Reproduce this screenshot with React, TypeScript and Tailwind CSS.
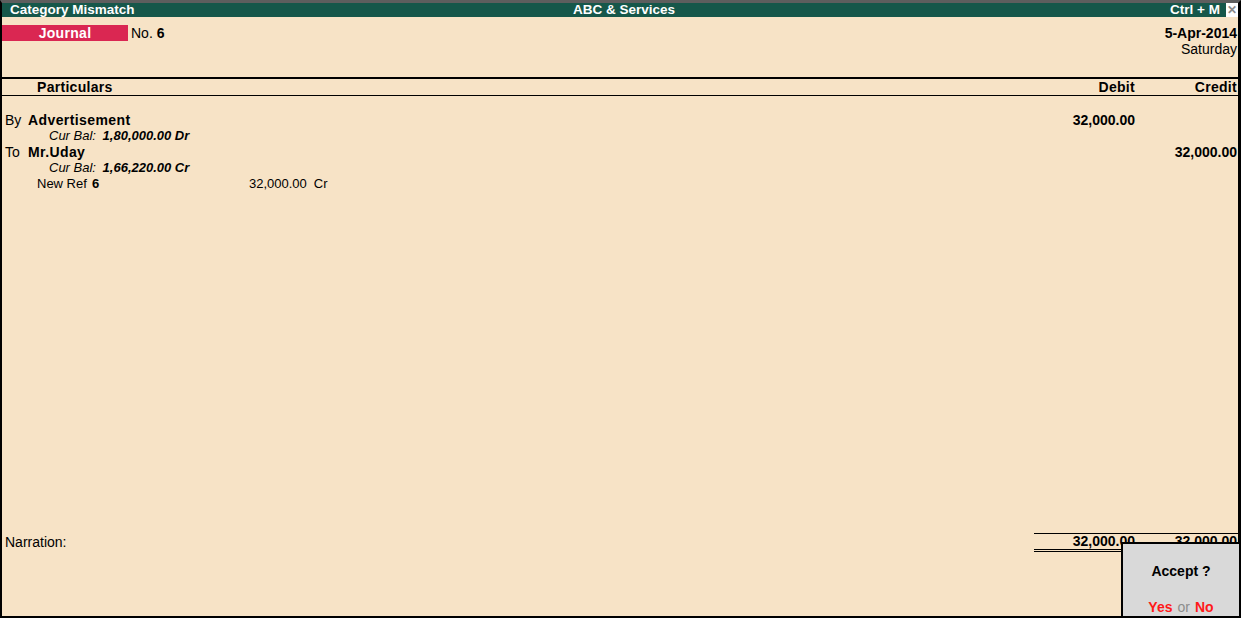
import React from 'react';

const font = { fontFamily: '"Liberation Sans", Arial, sans-serif' };

const App: React.FC = () => {
    return (
        <div
            className="relative w-[1241px] h-[618px] flex flex-col bg-[#f7e3c6] border-t-[3px] border-t-[#5e5e5e] border-l-2 border-r-[3px] border-b-2 border-black text-black text-[14px]"
            style={font}
        >
            {/* title bar */}
            <div className="h-[14px] flex items-center bg-[#16574a] text-white font-bold text-[13.5px] leading-[14px]">
                <div className="flex-1 pl-[8px]">Category Mismatch</div>
                <div>ABC &amp; Services</div>
                <div className="flex-1 flex justify-end items-center">
                    <span className="mr-[6px]">Ctrl + M</span>
                    <span className="w-[12px] h-[14px] bg-white text-[#8a8a8a] text-[12px] font-bold flex items-center justify-center">
                        ✕
                    </span>
                </div>
            </div>

            {/* voucher header */}
            <div className="h-[60px] flex justify-between pt-[8px]">
                <div className="flex items-start">
                    <div className="w-[126px] h-[16px] bg-[#da2752] text-white font-bold leading-[16px] text-center tracking-[0.3px]">
                        Journal
                    </div>
                    <div className="ml-[3px] leading-[16px]">
                        No. <span className="font-bold">6</span>
                    </div>
                </div>
                <div className="text-right pr-[1px] leading-[16px]">
                    <div className="font-bold">5-Apr-2014</div>
                    <div>Saturday</div>
                </div>
            </div>

            {/* column headers */}
            <div className="grid grid-cols-[1fr_101px_103px] border-t-2 border-b border-black h-[19px] pt-[1px] leading-[15px] font-bold tracking-[0.3px]">
                <div className="pl-[35px]">Particulars</div>
                <div className="text-right">Debit</div>
                <div className="text-right pr-[1px]">Credit</div>
            </div>

            {/* entries */}
            <div className="flex-1 pt-[16px] leading-[16px]">
                <div className="grid grid-cols-[1fr_101px_103px]">
                    <div className="pl-[3px] flex">
                        <span className="w-[23px]">By</span>
                        <span className="font-bold tracking-[0.4px]">Advertisement</span>
                    </div>
                    <div className="text-right font-bold">32,000.00</div>
                    <div />
                </div>
                <div className="pl-[47px] italic text-[13px]">
                    Cur Bal: <span className="font-bold ml-[3px]">1,80,000.00 Dr</span>
                </div>
                <div className="grid grid-cols-[1fr_101px_103px]">
                    <div className="pl-[3px] flex">
                        <span className="w-[23px]">To</span>
                        <span className="font-bold tracking-[0.4px]">Mr.Uday</span>
                    </div>
                    <div />
                    <div className="text-right font-bold pr-[1px]">32,000.00</div>
                </div>
                <div className="pl-[47px] italic text-[13px]">
                    Cur Bal: <span className="font-bold ml-[3px]">1,66,220.00 Cr</span>
                </div>
                <div className="pl-[35px] flex text-[13px]">
                    <span className="w-[55px]">New Ref</span>
                    <span className="w-[157px] font-bold">6</span>
                    <span>32,000.00</span>
                    <span className="ml-[7px]">Cr</span>
                </div>
            </div>

            {/* totals + narration */}
            <div className="h-[83px] grid grid-cols-[1fr_204px] items-start">
                <div className="pl-[3px] pt-[1px] leading-[16px]">Narration:</div>
                <div className="grid grid-cols-[101px_103px] border-t border-b-[3px] border-b-black border-double border-t-black font-bold leading-[15px]">
                    <div className="text-right">32,000.00</div>
                    <div className="text-right pr-[1px]">32,000.00</div>
                </div>
            </div>

            {/* accept prompt */}
            <div className="absolute -right-[3px] -bottom-[2px] w-[120px] h-[76px] bg-[#d9d9d9] border-2 border-black flex flex-col items-center">
                <div className="mt-[19px] font-bold leading-[16px]">Accept ?</div>
                <div className="mt-[20px] leading-[16px] font-bold">
                    <span className="text-[#ff1a1a]">Yes</span>
                    <span className="text-[#8c8c8c] font-normal mx-[5px]">or</span>
                    <span className="text-[#ff1a1a]">No</span>
                </div>
            </div>
        </div>
    );
};

export default App;
